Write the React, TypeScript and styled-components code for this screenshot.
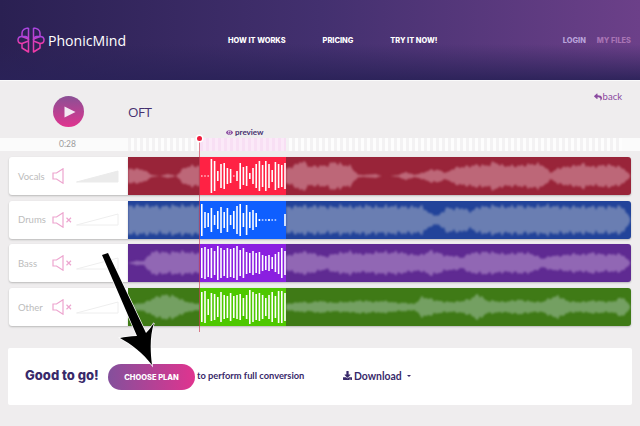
import React from "react";
import styled, { createGlobalStyle } from "styled-components";
import { FaDownload, FaEye, FaReply } from "react-icons/fa";

const Global = createGlobalStyle`
  html, body { margin: 0; padding: 0; background: #efedee; }
  * { box-sizing: border-box; }
`;

const Page = styled.div`
  position: relative;
  width: 640px;
  height: 426px;
  overflow: hidden;
  background: #efedee;
  font-family: "Lato", sans-serif;
`;

const Header = styled.header`
  display: flex;
  align-items: center;
  height: 81px;
  padding: 0 9px 0 17px;
  border-bottom: 1px solid #fafafa;
  background:
    linear-gradient(180deg, rgba(42, 34, 88, 0) 55%, rgba(42, 34, 88, 0.92) 100%),
    linear-gradient(90deg, #2a2052 0%, #43306f 50%, #6c4089 100%);
`;

const Brand = styled.div`
  display: flex;
  align-items: center;
  gap: 3px;
  width: 210px;
  font-family: "Open Sans", sans-serif;
  font-size: 14.1px;
  color: #fff;
`;

const Nav = styled.nav`
  display: flex;
  flex: 1;
  gap: 37px;
  padding-left: 1px;
`;

const NavLink = styled.a`
  font-family: "Inter", sans-serif;
  font-size: 7.4px;
  font-weight: 800;
  color: #fff;
`;

const Account = styled.div`
  display: flex;
  gap: 11px;
`;

const AccountLink = styled.a<{ $tone: string }>`
  font-family: "Inter", sans-serif;
  font-size: 7.4px;
  font-weight: 800;
  color: ${(p) => p.$tone};
`;

const Toolbar = styled.div`
  position: relative;
  display: flex;
  align-items: center;
  height: 57px;
  padding: 4px 0 0 53px;
`;

const PlayButton = styled.button`
  display: flex;
  align-items: center;
  justify-content: center;
  width: 31px;
  height: 31px;
  padding: 0 0 0 2px;
  border: none;
  border-radius: 50%;
  background: linear-gradient(180deg, #8a5095, #e0348f);
`;

const Title = styled.div`
  margin-left: 44px;
  font-family: "Open Sans", sans-serif;
  font-size: 13.5px;
  letter-spacing: -0.5px;
  color: #46306f;
`;

const BackLink = styled.a`
  position: absolute;
  top: 10px;
  right: 18px;
  display: flex;
  align-items: center;
  gap: 1px;
  font-size: 9.5px;
  color: #8a4aa0;
`;

const PreviewTag = styled.div`
  position: absolute;
  top: 46px;
  left: 226px;
  display: flex;
  align-items: center;
  gap: 2px;
  font-size: 8px;
  font-weight: 700;
  color: #46306f;
`;

const Timeline = styled.div`
  display: flex;
  height: 13px;
  margin-bottom: 6px;
  background: #fbfbfb;
`;

const TimeCell = styled.div`
  width: 128px;
  padding-left: 7px;
  font-size: 8.5px;
  line-height: 13px;
  text-align: center;
  color: #9b9b9b;
`;

const Ticks = styled.div<{ $width: number; $pink?: boolean }>`
  width: ${(p) => p.$width}px;
  background: repeating-linear-gradient(
    90deg,
    ${(p) => (p.$pink ? "#f8dff4" : "#f3f2f3")} 0 3px,
    ${(p) => (p.$pink ? "#fbe9f8" : "#fdfdfd")} 3px 6px
  );
`;

const Tracks = styled.div`
  display: flex;
  flex-direction: column;
  gap: 5.7px;
  padding: 0 9px;
`;

const Row = styled.div`
  display: flex;
  height: 38px;
`;

const Controls = styled.div`
  display: flex;
  align-items: center;
  width: 119px;
  padding-left: 9px;
  border-radius: 3px 0 0 3px;
  background: #fff;
  box-shadow: 0 1px 2px rgba(0, 0, 0, 0.22);
`;

const TrackName = styled.span`
  width: 34px;
  font-size: 9.5px;
  color: #bcbcbc;
`;

const Wave = styled.div<{ $bg: string }>`
  display: flex;
  flex: 1;
  overflow: hidden;
  border-radius: 0 3px 3px 0;
  background: ${(p) => p.$bg};
  box-shadow: 0 1px 2px rgba(0, 0, 0, 0.22);
`;

const Segment = styled.svg<{ $bg?: string }>`
  display: block;
  flex: none;
  background: ${(p) => p.$bg || "transparent"};
`;

const Envelope = styled.polygon`
  filter: blur(0.9px);
`;

const Playhead = styled.div`
  position: absolute;
  top: 138px;
  left: 199px;
  width: 1px;
  height: 194px;
  background: rgba(205, 60, 85, 0.65);
  &::before {
    content: "";
    position: absolute;
    top: -2px;
    left: -2px;
    width: 5px;
    height: 5px;
    border-radius: 50%;
    background: #f01c3c;
    box-shadow: 0 0 0 1.5px #fff;
  }
`;

const Summary = styled.section`
  display: flex;
  align-items: center;
  height: 57px;
  margin: 22px 8px 0;
  padding-left: 17px;
  border-radius: 2px;
  background: #fff;
`;

const Ready = styled.strong`
  width: 83px;
  margin-top: -3px;
  font-family: "Inter", sans-serif;
  font-size: 13px;
  font-weight: 800;
  color: #38296a;
`;

const ChoosePlan = styled.button`
  width: 87px;
  height: 26px;
  padding: 1px 0 0;
  border: none;
  border-radius: 13px;
  background: linear-gradient(90deg, #84509c, #e0348f);
  font-family: "Inter", sans-serif;
  font-size: 7.5px;
  font-weight: 800;
  color: #fff;
`;

const Hint = styled.span`
  width: 146px;
  margin: -2px 0 0 2px;
  font-size: 9.3px;
  font-weight: 700;
  color: #38296a;
`;

const DownloadLink = styled.a`
  display: flex;
  align-items: center;
  gap: 2px;
  margin-top: -2px;
  font-size: 10.4px;
  font-weight: 700;
  color: #38296a;
`;

const Caret = styled.i`
  width: 0;
  height: 0;
  margin-left: 3px;
  border-top: 2.5px solid #38296a;
  border-left: 2.5px solid transparent;
  border-right: 2.5px solid transparent;
`;

const Pointer = styled.svg`
  position: absolute;
  top: 246px;
  left: 95px;
`;

function Logo() {
  return (
    <svg width="28" height="26" viewBox="0 0 28 26" fill="none" strokeWidth="1.5" strokeLinejoin="round">
      <defs>
        <linearGradient id="logo" x1="0" y1="0" x2="0" y2="1">
          <stop offset="0" stopColor="#a845e0" />
          <stop offset="1" stopColor="#f03aa6" />
        </linearGradient>
      </defs>
      <g stroke="url(#logo)">
        <path d="M11.5 1 V25 L5 21 V16.5 M11.5 1 C8 1 5 3 5 6 V9.5 L11.5 12" />
        <path d="M5 9.5 C2.5 9.5 1 11 1 13 C1 15 2.5 16.5 5 16.5 L11.5 14 M5 9.5 H8.5 C10.5 10 11.5 11.5 11.5 13" />
        <path d="M16.5 1 V25 L23 21 V16.5 M16.5 1 C20 1 23 3 23 6 V9.5 L16.5 12" />
        <path d="M23 9.5 C25.5 9.5 27 11 27 13 C27 15 25.5 16.5 23 16.5 L16.5 14 M23 9.5 H19.5 C17.5 10 16.5 11.5 16.5 13" />
      </g>
    </svg>
  );
}

function Speaker({ muted }: { muted: boolean }) {
  return (
    <svg width="22" height="16" viewBox="0 0 22 16" fill="none" stroke="#eda5cf" strokeWidth="1.2">
      <path d="M1 5 H4.5 L11 0.8 V15.2 L4.5 11 H1 Z" />
      {muted && <path d="M14.5 5.8 L19 10.2 M19 5.8 L14.5 10.2" />}
    </svg>
  );
}

function Volume({ filled }: { filled: boolean }) {
  return (
    <svg width="43" height="13" viewBox="0 0 43 13" style={{ marginLeft: 2 }}>
      <polygon
        points="0.5,12 42,1 42,12"
        fill={filled ? "#ebebeb" : "#fff"}
        stroke={filled ? "#ebebeb" : "#eeeeee"}
      />
    </svg>
  );
}

// resample the hand-read stops every 2px and roughen them, the source wave is jagged
function shape(values: number[], width: number) {
  const step = width / (values.length - 1);
  const top: string[] = [];
  const bottom: string[] = [];
  for (let x = 0; x <= width; x += 2) {
    const i = Math.min(Math.floor(x / step), values.length - 2);
    const t = x / step - i;
    const v = values[i] * (1 - t) + values[i + 1] * t;
    const rough = v * (1 + 0.13 * Math.sin(x * 1.9) + 0.1 * Math.sin(x * 0.7 + 1));
    top.push(`${x},${19 - rough}`);
    bottom.unshift(`${x},${19 + rough}`);
  }
  return [...top, ...bottom].join(" ");
}

function Dim({ values, width, fill }: { values: number[]; width: number; fill: string }) {
  return (
    <Segment width={width} height={38} viewBox={`0 0 ${width} 38`}>
      <Envelope points={shape(values, width)} fill={fill} />
    </Segment>
  );
}

function Bars({ heights, bg }: { heights: number[]; bg: string }) {
  return (
    <Segment width={86} height={38} viewBox="0 0 86 38" $bg={bg}>
      {heights.map((h, i) => (
        <rect key={i} x={1 + i * 3.2} y={19 - h} width={1.6} height={h * 2} fill="#fff" />
      ))}
    </Segment>
  );
}

const tracks = [
  {
    name: "Vocals",
    muted: false,
    bg: "#992439",
    bright: "#ff2244",
    fill: "#bd6778",
    left: [7, 7, 6, 1, 0, 2, 0, 8, 10, 10],
    right: [7, 10, 15, 9, 10, 10, 14, 11, 10, 1, 1, 2, 0, 0, 1, 4, 1, 3, 6, 6, 3, 8, 9, 10, 11, 10, 14, 10, 10, 10, 11, 12, 11, 3, 8, 9, 10, 12, 9, 10, 11, 10, 8, 0],
    bars: [0.5, 0.5, 0.5, 17, 15, 5, 12, 13, 8, 7, 0.5, 5, 13, 9, 10, 3, 8, 12, 15, 11, 15, 12, 6, 14, 12, 11, 13],
  },
  {
    name: "Drums",
    muted: true,
    bg: "#22439a",
    bright: "#0f5fff",
    fill: "#6a7eb2",
    left: [14, 14, 14, 14, 13, 14, 14, 14, 14, 14],
    right: [13, 13, 14, 13, 14, 13, 13, 14, 13, 13, 14, 13, 13, 14, 13, 13, 13, 13, 6, 4, 12, 11, 12, 8, 13, 13, 14, 13, 13, 14, 13, 13, 14, 14, 13, 13, 13, 13, 13, 13, 13, 13, 13, 0],
    bars: [16, 8, 7, 12, 5, 9, 13, 8, 12, 5, 9, 14, 16, 7, 15, 8, 10, 7, 1, 0.6, 0.6, 1, 0.6, 0.6, 0, 0, 6],
  },
  {
    name: "Bass",
    muted: true,
    bg: "#5f2a92",
    bright: "#8a1fe0",
    fill: "#9167b4",
    left: [0, 2, 2, 11, 11, 10, 11, 11, 10, 10],
    right: [7, 9, 11, 10, 8, 6, 9, 10, 11, 9, 9, 10, 11, 10, 11, 9, 8, 8, 12, 10, 7, 7, 5, 10, 10, 11, 10, 9, 9, 10, 10, 8, 4, 7, 7, 8, 9, 8, 10, 9, 8, 9, 8, 0],
    bars: [15, 16, 14, 15, 12, 17, 15, 13, 15, 14, 15, 17, 13, 15, 11, 10, 12, 10, 11, 8, 7, 8, 6, 9, 11, 15, 12],
  },
  {
    name: "Other",
    muted: true,
    bg: "#3f7a16",
    bright: "#4ec800",
    fill: "#74a062",
    left: [2, 3, 4, 8, 11, 12, 10, 6, 4, 3],
    right: [3, 4, 5, 4, 6, 5, 4, 5, 5, 6, 6, 5, 6, 5, 4, 4, 3, 10, 8, 6, 5, 5, 6, 8, 13, 6, 6, 5, 6, 7, 6, 5, 5, 9, 11, 6, 5, 5, 6, 6, 5, 6, 10, 0],
    bars: [15, 16, 8, 14, 13, 10, 15, 12, 11, 14, 11, 12, 13, 9, 12, 17, 15, 13, 14, 12, 9, 12, 15, 11, 16, 16, 14],
  },
];

export default function App() {
  return (
    <Page>
      <Global />
      <Header>
        <Brand>
          <Logo />
          PhonicMind
        </Brand>
        <Nav>
          <NavLink>HOW IT WORKS</NavLink>
          <NavLink>PRICING</NavLink>
          <NavLink>TRY IT NOW!</NavLink>
        </Nav>
        <Account>
          <AccountLink $tone="#b9a3da">LOGIN</AccountLink>
          <AccountLink $tone="#a874b4">MY FILES</AccountLink>
        </Account>
      </Header>

      <Toolbar>
        <PlayButton>
          <svg width="12" height="12" viewBox="0 0 12 12">
            <polygon points="0.5,0.5 11.5,6 0.5,11.5" fill="#f3e9f3" />
          </svg>
        </PlayButton>
        <Title>OFT</Title>
        <BackLink>
          <FaReply size={8} />
          back
        </BackLink>
        <PreviewTag>
          <FaEye size={7} color="#8a4aa0" />
          preview
        </PreviewTag>
      </Toolbar>

      <Timeline>
        <TimeCell>0:28</TimeCell>
        <Ticks $width={72} />
        <Ticks $width={86} $pink />
        <Ticks $width={336} />
      </Timeline>

      <Tracks>
        {tracks.map((t) => (
          <Row key={t.name}>
            <Controls>
              <TrackName>{t.name}</TrackName>
              <Speaker muted={t.muted} />
              <Volume filled={!t.muted} />
            </Controls>
            <Wave $bg={t.bg}>
              <Dim values={t.left} width={72} fill={t.fill} />
              <Bars heights={t.bars} bg={t.bright} />
              <Dim values={t.right} width={345} fill={t.fill} />
            </Wave>
          </Row>
        ))}
      </Tracks>

      <Summary>
        <Ready>Good to go!</Ready>
        <ChoosePlan>CHOOSE PLAN</ChoosePlan>
        <Hint>to perform full conversion</Hint>
        <DownloadLink>
          <FaDownload size={9} />
          Download
          <Caret />
        </DownloadLink>
      </Summary>

      <Playhead />

      <Pointer width="70" height="125" viewBox="95 246 70 125">
        <path
          d="M102 255 L108 253 L146 333 C149 330 151 327 154 323 C150 335 150 350 152 365 C143 353 131 344 120 338 C125 337 130 336 137 336 Z"
          fill="#000"
          stroke="#fff"
          strokeWidth="1.4"
          paintOrder="stroke"
        />
      </Pointer>
    </Page>
  );
}
